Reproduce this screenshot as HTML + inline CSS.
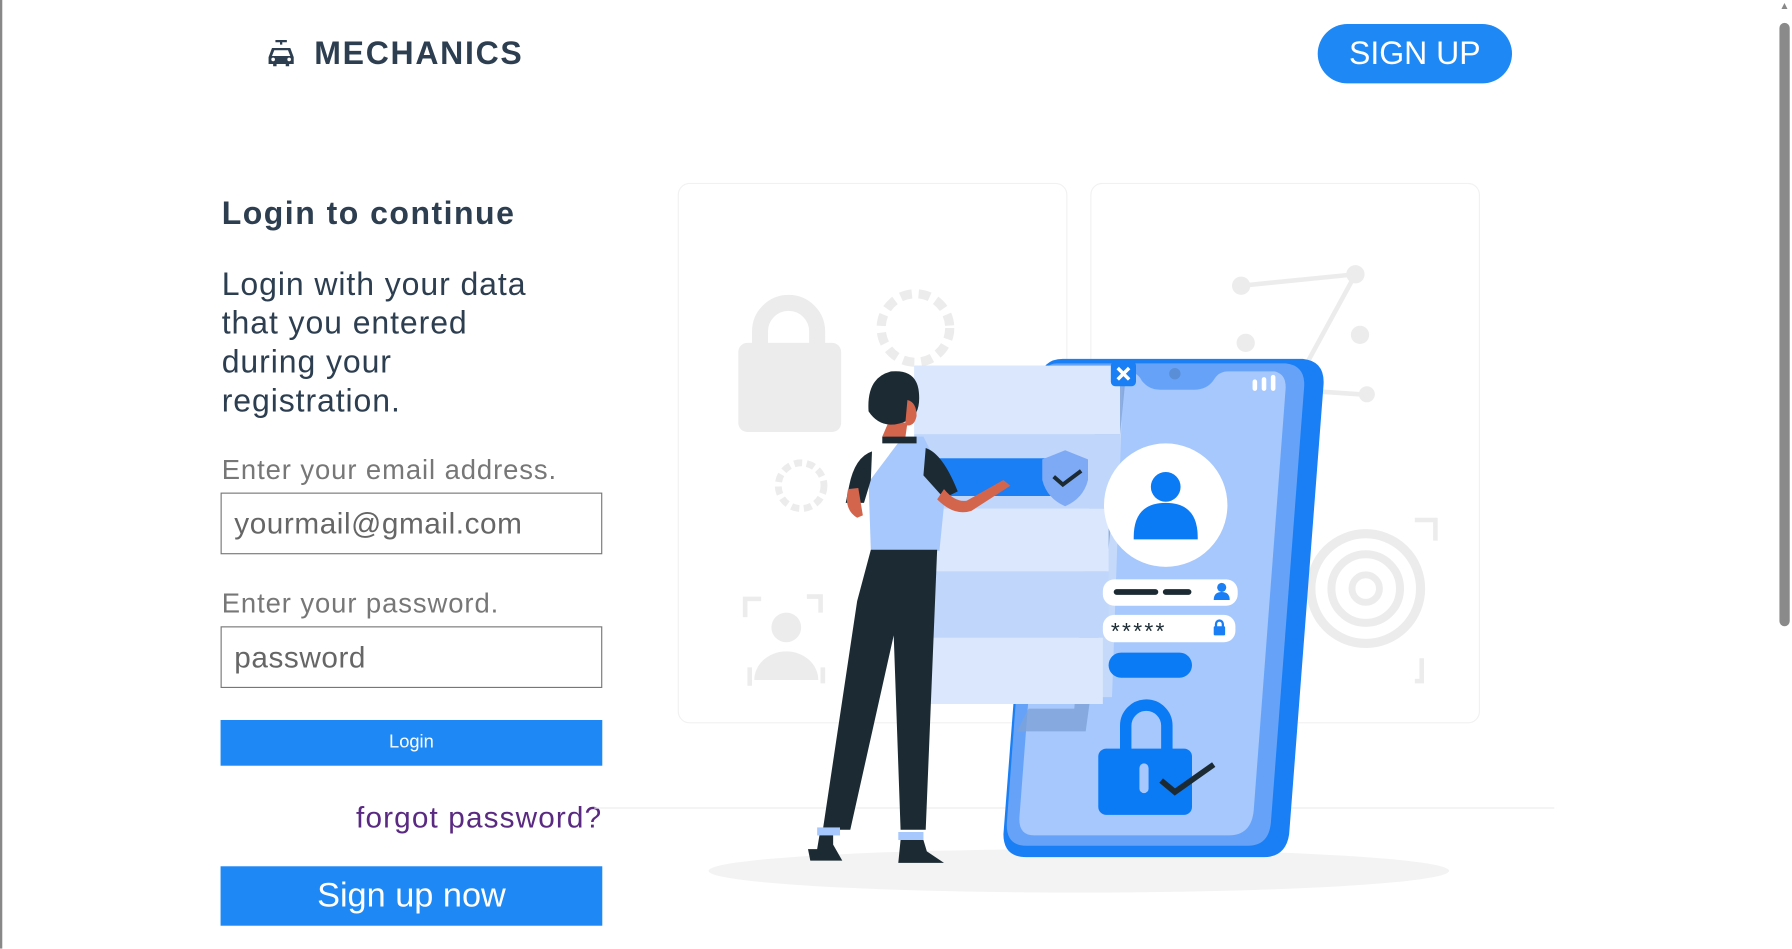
<!DOCTYPE html>
<html><head><meta charset="utf-8"><style>
html,body{margin:0;padding:0;width:1792px;height:948px;overflow:hidden;background:#fff;}
#w{position:absolute;left:0;top:0;width:1568px;height:830px;transform:scale(1.142857);transform-origin:0 0;font-family:"Liberation Sans",sans-serif;}
.a{position:absolute;white-space:nowrap;}
.inp{position:absolute;left:193px;width:334px;height:52px;border:1px solid #777;box-sizing:border-box;font-size:26px;color:#666;padding-left:11px;line-height:50px;letter-spacing:.5px;}
.btn{position:absolute;left:193px;width:334px;background:#1e88f5;color:#fff;text-align:center;}
</style></head><body><div id="w">
<div style="position:absolute;left:0;top:0;width:2px;height:830px;background:#888"></div>
<div style="position:absolute;left:1556px;top:0;width:12px;height:830px;background:#fff"></div>
<div style="position:absolute;left:1557px;top:20px;width:9px;height:528px;background:#8a8a8a;border-radius:5px"></div>
<div class="a" style="left:1557px;top:0;font-size:9px;color:#888">▲</div>
<svg class="a" style="left:233px;top:34px" width="26" height="26" viewBox="0 0 26 26"><path d="M8 2h10M13 2v3" stroke="#2c3e50" stroke-width="2"/><path d="M5 8h16l3 8v6h-4v2h-3v-2H9v2H6v-2H2v-6z" fill="#2c3e50"/><path d="M7 10h12l2 5H5z" fill="#fff"/><circle cx="6" cy="18" r="1.6" fill="#fff"/><circle cx="20" cy="18" r="1.6" fill="#fff"/></svg>
<div class="a" style="left:275px;top:31px;font-size:28px;font-weight:bold;color:#2c3e50;letter-spacing:1.5px">MECHANICS</div>
<div class="a" style="left:1153px;top:21px;width:170px;height:52px;border-radius:26px;background:#1e88f5;color:#fff;font-size:28px;text-align:center;line-height:52px">SIGN UP</div>
<div class="a" style="left:194px;top:171px;font-size:28px;font-weight:bold;color:#2c3e50;letter-spacing:1.3px">Login to continue</div>
<div class="a" style="left:194px;top:232px;font-size:28px;line-height:34px;color:#2c3e50;letter-spacing:.8px">Login with your data<br>that you entered<br>during your<br>registration.</div>
<div class="a" style="left:194px;top:398px;font-size:24px;color:#777;letter-spacing:.8px">Enter your email address.</div>
<div class="inp" style="top:431px;height:54px;line-height:52px">yourmail@gmail.com</div>
<div class="a" style="left:194px;top:515px;font-size:24px;color:#777;letter-spacing:.8px">Enter your password.</div>
<div class="inp" style="top:548px;height:54px;line-height:52px">password</div>
<div class="btn" style="top:630px;height:40px;line-height:40px;font-size:16px">Login</div>
<div class="a" style="left:285px;top:700px;font-size:26px;color:#5a2a82;width:242px;text-align:right;letter-spacing:1px">forgot password?</div>
<div class="btn" style="top:758px;height:52px;line-height:52px;font-size:30px">Sign up now</div>
<svg class="a" style="left:0;top:0" width="1568" height="830" viewBox="0 0 1568 830">
<rect x="593.5" y="160.5" width="340" height="472" rx="10" fill="none" stroke="#f1f1f1"/>
<rect x="954.5" y="160.5" width="340" height="472" rx="10" fill="none" stroke="#f1f1f1"/>
<line x1="520" y1="707" x2="1360" y2="707" stroke="#eee"/>
<ellipse cx="944" cy="762" rx="324" ry="19" fill="#f3f3f3"/>
<g fill="#ececec" stroke="#ececec">
<path d="M665 310v-20a25 25 0 0 1 50 0v20" fill="none" stroke-width="14"/>
<rect x="646" y="300" width="90" height="78" rx="8" stroke="none"/>
<circle cx="801" cy="287" r="30" fill="none" stroke-width="8" stroke-dasharray="10 6"/>
<circle cx="701" cy="425" r="20" fill="none" stroke-width="6" stroke-dasharray="7 4"/>
<circle cx="688" cy="549" r="13" stroke="none"/><path d="M660 595a28 25 0 0 1 56 0z" stroke="none"/>
<path d="M652 540v-16h14M706 522h12v14M656 584v16M720 584v14" fill="none" stroke-width="4"/>
<path d="M1086 250l100-10-60 110M1190 345l-60-4" fill="none" stroke-width="4"/>
<circle cx="1086" cy="250" r="8" stroke="none"/><circle cx="1186" cy="240" r="8" stroke="none"/><circle cx="1190" cy="293" r="8" stroke="none"/><circle cx="1090" cy="300" r="8" stroke="none"/><circle cx="1196" cy="345" r="7" stroke="none"/>
<circle cx="1195" cy="515" r="48" fill="none" stroke-width="8"/><circle cx="1195" cy="515" r="30" fill="none" stroke-width="7"/><circle cx="1195" cy="515" r="12" fill="none" stroke-width="6"/>
<path d="M1238 455h18v18M1238 596h6v-20" fill="none" stroke-width="4"/>
</g>
<path d="M930 314h210q20 2 18 24l-30 392q-3 20-22 20H898q-20 0-20-20l30-392q2-24 22-24z" fill="#1a7ff5"/>
<path d="M925 318h200q18 2 16 22l-29 380q-2 20-20 20H898q-18 0-17-20l28-380q2-22 16-22z" fill="#66a3f8"/>
<path d="M935 325h50q10 0 14 8q6 8 16 8h30q12 0 18-10q4-6 12-6h40q10 2 10 14l-28 370q-2 22-22 22H905q-14 0-13-16l28-366q2-24 15-24z" fill="#a7c8fc"/>
<circle cx="1028" cy="327" r="5" fill="#5a8fd8"/>
<path d="M1098 340v-6M1106 340v-8M1114 340v-10" stroke="#fff" stroke-width="4" stroke-linecap="round"/>
<path d="M800 320h183l-10 290h-173z" fill="#c5dafb"/>
<path d="M960 350l25-20-10 100-10 100-15 110h-60l10-20h40z" fill="#7ea3d8" opacity=".8"/>
<rect x="800" y="320" width="180" height="60" fill="#dbe7fd"/>
<rect x="800" y="380" width="180" height="65" fill="#c0d6fb"/>
<rect x="800" y="445" width="170" height="55" fill="#dbe7fd"/>
<rect x="800" y="500" width="170" height="58" fill="#c0d6fb"/>
<rect x="800" y="558" width="165" height="58" fill="#dbe7fd"/>
<rect x="820" y="401" width="100" height="33" fill="#1a7ff5"/>
<path d="M912 402l20-8 20 8v18q-4 16-20 23q-16-7-20-23z" fill="#7eaaf5"/>
<path d="M922 417l8 7 16-12" stroke="#1c2b33" stroke-width="3.5" fill="none"/>
<rect x="972" y="316" width="22" height="22" rx="4" fill="#1a7ff5"/>
<path d="M978 322l10 10M988 322l-10 10" stroke="#fff" stroke-width="3"/>
<circle cx="1020" cy="442" r="54" fill="#fff"/>
<circle cx="1020" cy="426" r="13" fill="#0b7af5"/>
<path d="M992 470q0-30 28-30q28 0 28 30v2h-56z" fill="#0b7af5"/>
<rect x="965" y="507" width="118" height="23" rx="10" fill="#fff"/>
<path d="M977 518h34M1020 518h20" stroke="#1c2b33" stroke-width="5" stroke-linecap="round"/>
<circle cx="1069" cy="514" r="4" fill="#1a7ff5"/><path d="M1062 525q0-7 7-7q7 0 7 7z" fill="#1a7ff5"/>
<rect x="965" y="538" width="116" height="24" rx="10" fill="#fff"/>
<text x="972" y="559" font-size="20" font-family="Liberation Sans" fill="#1c2b33" letter-spacing="2">*****</text>
<path d="M1064 549v-3a3 3 0 0 1 6 0v3" stroke="#1a7ff5" stroke-width="2" fill="none"/>
<rect x="1062" y="548" width="10" height="8" rx="1" fill="#1a7ff5"/>
<rect x="970" y="571" width="73" height="22" rx="11" fill="#0b7af5"/>
<path d="M985 660v-25a18 18 0 0 1 36 0v25" fill="none" stroke="#0b7af5" stroke-width="10"/>
<rect x="961" y="655" width="82" height="58" rx="7" fill="#0b7af5"/>
<rect x="997" y="668" width="8" height="26" rx="4" fill="#a7c8fc"/>
<path d="M1016 683l12 10 34-24" stroke="#1c2b33" stroke-width="5" fill="none"/>
<path d="M790 382h18l20 40-6 60h-60l-2-60z" fill="#a7c8fc"/>
<path d="M763 395q-15 5-20 30l-3 15 16 0 6-20z" fill="#1c2b33"/>
<path d="M810 392q15 5 28 38l-12 6-18-20z" fill="#1c2b33"/>
<path d="M826 428q10 12 20 10l32-18 6 5-34 22q-15 5-30-10z" fill="#d4654d"/>
<path d="M742 428q-4 18 8 25l5-2-4-24z" fill="#d4654d"/>
<path d="M772 382l6-14 16 2-2 14z" fill="#d4654d"/>
<path d="M760 360q-2-30 20-35q22-2 24 18q2 20-10 25q-22 10-34-8z" fill="#1c2b33"/>
<path d="M794 350q8 2 8 14q-2 10-10 8z" fill="#d4654d"/>
<path d="M772 382h30v6h-30z" fill="#1c2b33"/>
<path d="M762 481h58l-10 245h-22l-6-170-38 170h-24l30-200z" fill="#1c2b33"/>
<rect x="715" y="724" width="20" height="7" fill="#a7c8fc"/>
<rect x="786" y="728" width="22" height="7" fill="#a7c8fc"/>
<path d="M717 731l-2 12h-8l2 10h28l-8-14 0-8z" fill="#1c2b33"/>
<path d="M788 735l-2 20h40l-15-10-3-10z" fill="#1c2b33"/>
</svg>
</div></body></html>
